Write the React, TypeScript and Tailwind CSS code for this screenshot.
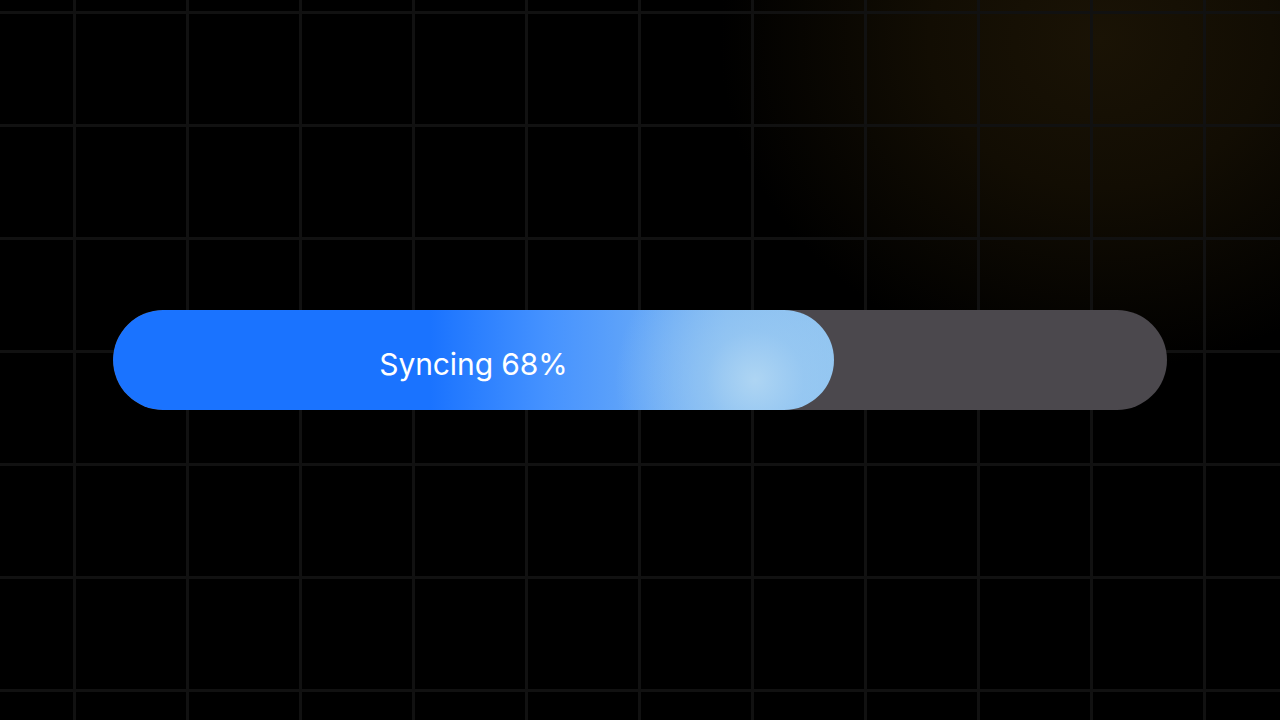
export default function App() {
  return (
    <div className="w-[1280px] h-[720px] overflow-hidden bg-black bg-[linear-gradient(to_right,#111111_3px,transparent_3px),linear-gradient(to_bottom,#111111_3px,transparent_3px),radial-gradient(ellipse_380px_330px_at_1100px_40px,#1a1305_0%,#120d03_45%,transparent_100%)] bg-[size:113px_113px,113px_113px,100%_100%] bg-[position:73px_11px,73px_11px,0_0] flex items-center px-[113px]">
      <div className="w-full h-[100px] rounded-full bg-[#4b484d] overflow-hidden flex">
        <div
          className="h-full rounded-full flex items-center justify-center pt-[8px] bg-[radial-gradient(circle_140px_at_642px_70px,#aed5f3_0%,rgba(160,205,242,0.6)_35%,transparent_100%),linear-gradient(90deg,#1a73ff_0%,#1a73ff_44%,#4592ff_60%,#7db7f2_85%,#8cc2f0_100%)]"
          style={{ width: "68.4%" }}
        >
          <span className="text-white text-[30px] font-[Inter,'Noto_Sans',sans-serif] tracking-[-0.1px] leading-none">
            Syncing 68%
          </span>
        </div>
      </div>
    </div>
  );
}
